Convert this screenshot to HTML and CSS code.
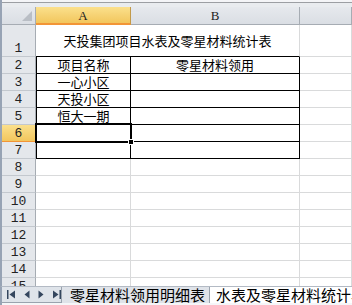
FILE: index.html
```html
<!DOCTYPE html>
<html lang="zh-CN">
<head>
  <meta charset="UTF-8">
  <title>水表及零星材料统计表</title>
  <link rel="stylesheet" href="styles.css">
</head>
<body>
  <div class="topbar"></div>

  <div class="sheet">
    <!-- column headers -->
    <div class="corner"><span class="corner-mark"></span></div>
    <div class="hd sel">A</div>
    <div class="hd">B</div>
    <div class="hd"></div>

    <!-- row 1: merged title -->
    <div class="rh tall">1</div>
    <div class="c title">天投集团项目水表及零星材料统计表</div>
    <div class="c"></div>

    <div class="rh">2</div>
    <div class="c t first">项目名称</div>
    <div class="c t">零星材料领用</div>
    <div class="c"></div>

    <div class="rh">3</div>
    <div class="c t first">一心小区</div>
    <div class="c t"></div>
    <div class="c"></div>

    <div class="rh">4</div>
    <div class="c t first">天投小区</div>
    <div class="c t"></div>
    <div class="c"></div>

    <div class="rh">5</div>
    <div class="c t first">恒大一期</div>
    <div class="c t"></div>
    <div class="c"></div>

    <div class="rh sel">6</div>
    <div class="c t first active"><span class="handle"></span></div>
    <div class="c t"></div>
    <div class="c"></div>

    <div class="rh">7</div>
    <div class="c t first"></div>
    <div class="c t"></div>
    <div class="c"></div>

    <div class="rh">8</div>
    <div class="c"></div>
    <div class="c"></div>
    <div class="c"></div>

    <div class="rh">9</div>
    <div class="c"></div>
    <div class="c"></div>
    <div class="c"></div>

    <div class="rh">10</div>
    <div class="c"></div>
    <div class="c"></div>
    <div class="c"></div>

    <div class="rh">11</div>
    <div class="c"></div>
    <div class="c"></div>
    <div class="c"></div>

    <div class="rh">12</div>
    <div class="c"></div>
    <div class="c"></div>
    <div class="c"></div>

    <div class="rh">13</div>
    <div class="c"></div>
    <div class="c"></div>
    <div class="c"></div>

    <div class="rh">14</div>
    <div class="c"></div>
    <div class="c"></div>
    <div class="c"></div>

    <div class="rh">15</div>
    <div class="c"></div>
    <div class="c"></div>
    <div class="c"></div>
  </div>

  <div class="tabbar">
    <div class="nav">
      <svg width="9" height="9" viewBox="0 0 9 9"><rect x="0" y="0" width="1.5" height="9" fill="#34465e"/><polygon points="8,0.5 8,8.5 2.5,4.5" fill="#34465e"/></svg>
      <svg width="6" height="9" viewBox="0 0 6 9"><polygon points="5.5,0.5 5.5,8.5 0.5,4.5" fill="#34465e"/></svg>
      <svg width="6" height="9" viewBox="0 0 6 9"><polygon points="0.5,0.5 0.5,8.5 5.5,4.5" fill="#34465e"/></svg>
      <svg width="9" height="9" viewBox="0 0 9 9"><polygon points="1,0.5 1,8.5 6.5,4.5" fill="#34465e"/><rect x="7.5" y="0" width="1.5" height="9" fill="#34465e"/></svg>
    </div>
    <div class="tab">零星材料领用明细表</div>
    <div class="tab active">水表及零星材料统计表</div>
  </div>
</body>
</html>
```

FILE: styles.css
```css
* {
  margin: 0;
  padding: 0;
  box-sizing: border-box;
}

body {
  width: 352px;
  height: 305px;
  overflow: hidden;
  background: #ffffff;
  color: #000000;
  font-family: "Noto Sans CJK SC", sans-serif;
  font-size: 13px;
}

.topbar {
  height: 7px;
  border-left: 2px solid #97a3b4;
  background: linear-gradient(#f4f5f7 0 2px, #9c9fa3 2px 3px, #e9ecef 3px);
}

.sheet {
  display: grid;
  grid-template-columns: 34px 95px 169px 1fr;
  grid-template-rows: 18px 32px;
  grid-auto-rows: 17px;
  height: 279px;
  overflow: hidden;
  border-left: 2px solid #97a3b4;
}

/* headers */
.corner,
.hd,
.rh {
  background: linear-gradient(#e6e9ed, #dadee4);
  border-right: 1px solid #a6acb3;
  border-bottom: 1px solid #a6acb3;
  color: #222222;
}

.corner {
  position: relative;
}

.corner-mark {
  position: absolute;
  right: 3px;
  bottom: 3px;
  width: 0;
  height: 0;
  border-left: 10px solid transparent;
  border-bottom: 10px solid #b9bec5;
}

.hd {
  display: flex;
  align-items: center;
  justify-content: center;
  font-family: "Liberation Serif", serif;
  font-size: 13px;
  padding-top: 1px;
}

.rh {
  display: flex;
  align-items: flex-end;
  justify-content: center;
  font-family: "Liberation Mono", monospace;
  font-size: 13px;
  line-height: 15px;
  background: #e4e7eb;
  border-bottom-color: #c3c8ce;
}

.hd.sel,
.rh.sel {
  background: linear-gradient(#fbe08c, #f2c65d);
  border-right-color: #c29a4a;
  border-bottom: 1px solid #f29536;
}

.hd.sel {
  border-bottom-width: 2px;
}

/* cells */
.c {
  border-right: 1px solid #d9dadb;
  border-bottom: 1px solid #d9dadb;
  display: flex;
  align-items: center;
  justify-content: center;
  line-height: 14px;
  white-space: nowrap;
}

.c.title {
  grid-column: span 2;
  border-bottom-color: #000000;
  padding-top: 1px;
}

.c.t {
  border-right-color: #000000;
  border-bottom-color: #000000;
}

.c.first {
  border-left: 1px solid #000000;
}

.c.active {
  position: relative;
}

.c.active::before {
  content: "";
  position: absolute;
  left: -2px;
  top: -2px;
  right: -2px;
  bottom: -2px;
  border: 2px solid #000000;
}

.handle {
  position: absolute;
  right: -4px;
  bottom: -4px;
  width: 6px;
  height: 6px;
  background: #000000;
  border: 1px solid #ffffff;
}

/* sheet tabs */
.tabbar {
  height: 19px;
  display: flex;
  align-items: flex-start;
  border-left: 2px solid #97a3b4;
  border-top: 1px solid #b3bac4;
  background: linear-gradient(#dfe4ea 0 15px, #9aa3ae 15px 16px, #f5f6f8 16px);
}

.nav {
  width: 62px;
  height: 15px;
  display: flex;
  align-items: center;
  gap: 8px;
  padding-left: 5px;
}

.tab {
  height: 16px;
  font-size: 15px;
  line-height: 15px;
  padding: 0 4px 0 8px;
  white-space: nowrap;
  background: #dfe3e9;
  border-left: 1px solid #9aa3ae;
  border-right: 1px solid #9aa3ae;
}

.tab.active {
  background: #ffffff;
  border-left: none;
  padding-left: 6px;
}
```
